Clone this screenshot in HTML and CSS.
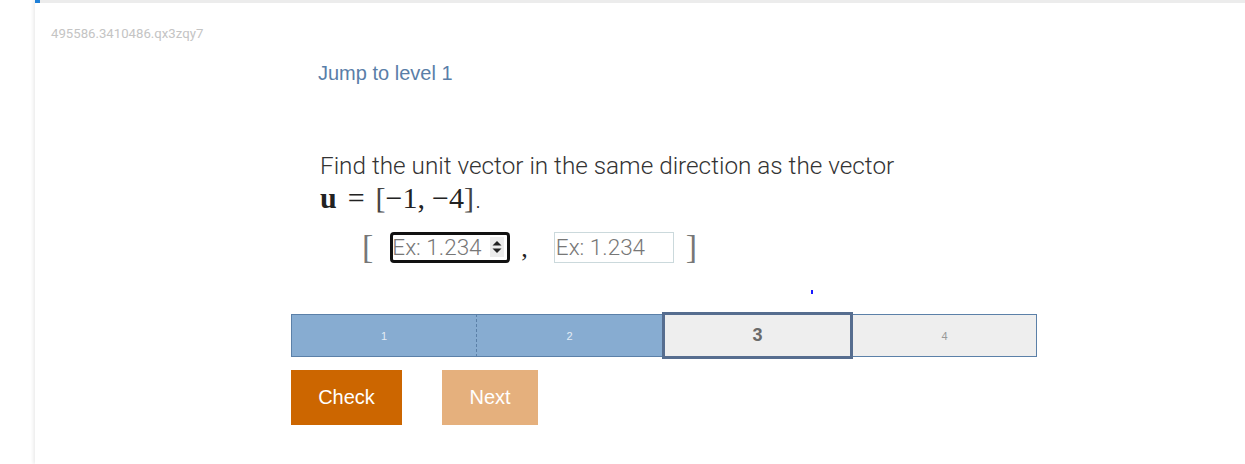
FILE: index.html
```html
<!DOCTYPE html>
<html>
<head>
<meta charset="utf-8">
<link rel="stylesheet" href="styles.css">
</head>
<body>
<div class="page">
  <div class="card">
    <div class="topbar"><div class="topbar-blue"></div><div class="topbar-gray"></div></div>
    <div class="ident">495586.3410486.qx3zqy7</div>
    <div class="jump">Jump to level 1</div>
    <div class="question">
      <div class="q-text">Find the unit vector in the same direction as the vector</div>
      <div class="q-math"><span class="bold-u">u</span><span class="rel">=</span><span class="br">[</span>−1,<span class="thin"></span>−4<span class="br">]</span><span class="dot">.</span></div>
    </div>
    <div class="answer-row">
      <span class="bracket">[</span>
      <div class="num-box focused">
        <input class="num-input" type="text" placeholder="Ex: 1.234">
        <div class="spinner">
          <svg width="14" height="20" viewBox="0 0 14 20"><path d="M2.5 8.5 L7 4 L11.5 8.5 Z" fill="#222"/><path d="M2.5 11.5 L7 16 L11.5 11.5 Z" fill="#222"/></svg>
        </div>
      </div>
      <span class="comma">,</span>
      <div class="num-box plain">
        <input class="num-input" type="text" placeholder="Ex: 1.234">
      </div>
      <span class="bracket">]</span>
    </div>
    <div class="cursor-row"><span class="cursor-mark"></span></div>
    <div class="progress">
      <div class="seg seg-done seg-first">1</div>
      <div class="seg seg-done seg-second">2</div>
      <div class="seg seg-current">3</div>
      <div class="seg seg-todo">4</div>
    </div>
    <div class="buttons">
      <button class="btn btn-check">Check</button>
      <button class="btn btn-next">Next</button>
    </div>
  </div>
</div>
</body>
</html>
```

FILE: styles.css
```css
html, body {
  margin: 0;
  padding: 0;
  background: #ffffff;
}
body {
  font-family: Roboto, "Liberation Sans", sans-serif;
  height: 464px;
  overflow: hidden;
}
.page {
  padding-left: 35px;
  height: 464px;
}
.card {
  height: 464px;
  background: #fff;
  box-shadow: -2px 0 3px rgba(0, 0, 0, 0.07);
}
.topbar {
  display: flex;
  height: 3px;
}
.topbar-blue {
  width: 5px;
  background: #1f80d8;
}
.topbar-gray {
  flex: 1;
  background: #ececec;
}
.ident {
  margin: 23px 0 0 16px;
  font-size: 13.2px;
  line-height: 16px;
  color: #c4c4c4;
}
.jump {
  margin: 19px 0 0 283px;
  font-family: "Liberation Sans", Arial, sans-serif;
  font-size: 20px;
  line-height: 24px;
  color: #5a7ea8;
}
.question {
  margin: 66px 0 0 285px;
  color: #333;
}
.q-text {
  font-weight: 300;
  font-size: 24.3px;
  line-height: 30px;
}
.q-math {
  font-family: "Liberation Serif", "DejaVu Serif", serif;
  font-size: 30px;
  line-height: 34px;
  color: #222;
}
.bold-u {
  font-weight: bold;
}
.rel {
  margin: 0 11px;
}
.thin {
  display: inline-block;
  width: 7px;
}
.br {
  color: #444;
}
.dot {
  font-size: 16px;
  margin-left: 2px;
}
.answer-row {
  margin: 10px 0 0 327px;
  display: flex;
  align-items: center;
  height: 34px;
}
.bracket {
  font-family: "Liberation Serif", serif;
  font-size: 34px;
  line-height: 34px;
  color: #777;
}
.num-box {
  display: flex;
  align-items: center;
  box-sizing: border-box;
  width: 120px;
  background: #fff;
  overflow: hidden;
}
.num-box.focused {
  margin-left: 17px;
  height: 31px;
  border: 3px solid #111;
  border-radius: 4px;
}
.num-box.plain {
  margin-left: 26px;
  margin-right: 12px;
  height: 31px;
  border: 1px solid #cbd9dc;
}
.num-input {
  flex: 1;
  min-width: 0;
  border: none;
  outline: none;
  padding: 0 0 0 1px;
  margin: 0;
  font-family: Roboto, sans-serif;
  font-weight: 300;
  font-size: 22.5px;
  color: #333;
  background: transparent;
}
.focused .num-input {
  padding-left: 0;
  margin-left: -1px;
}
.num-input::placeholder {
  color: #777;
}
.spinner {
  flex: none;
  width: 14px;
  height: 20px;
  margin-right: 3px;
  background: #ececec;
  display: flex;
  align-items: center;
  justify-content: center;
}
.comma {
  margin-left: 11px;
  font-family: "Liberation Serif", serif;
  font-size: 26px;
  line-height: 34px;
  color: #222;
  position: relative;
  top: 2px;
}
.cursor-row {
  height: 48px;
  display: flex;
  align-items: flex-start;
  padding-left: 776px;
}
.cursor-mark {
  margin-top: 26px;
  width: 2px;
  height: 4px;
  background: #1a1aff;
}
.progress {
  margin-left: 256px;
  display: flex;
  align-items: center;
  height: 47px;
  font-family: "Liberation Sans", Arial, sans-serif;
}
.seg {
  box-sizing: border-box;
  height: 43px;
  display: flex;
  align-items: center;
  justify-content: center;
  font-size: 11px;
}
.seg-done {
  background: #87acd1;
  color: #e4edf6;
  border-top: 1px solid #5b80a8;
  border-bottom: 1px solid #5b80a8;
}
.seg-first {
  width: 186px;
  border-left: 1px solid #5b80a8;
  border-right: 1px dashed #5b80a8;
}
.seg-second {
  width: 185px;
}
.seg-current {
  width: 191px;
  height: 47px;
  background: #eeeeee;
  border: 3.5px solid #566d8f;
  font-size: 18px;
  font-weight: bold;
  color: #6a6a6a;
}
.seg-todo {
  width: 184px;
  background: #eeeeee;
  border: 1px solid #5b80a8;
  border-left: none;
  color: #999;
}
.buttons {
  margin: 11px 0 0 256px;
  display: flex;
  gap: 40px;
}
.btn {
  height: 55px;
  border: none;
  padding: 0 27px;
  font-family: "Liberation Sans", Arial, sans-serif;
  font-size: 20px;
  color: #fff;
  cursor: pointer;
}
.btn-check {
  width: 111px;
  background: #cc6600;
}
.btn-next {
  width: 96px;
  background: #e5b07d;
}
```
